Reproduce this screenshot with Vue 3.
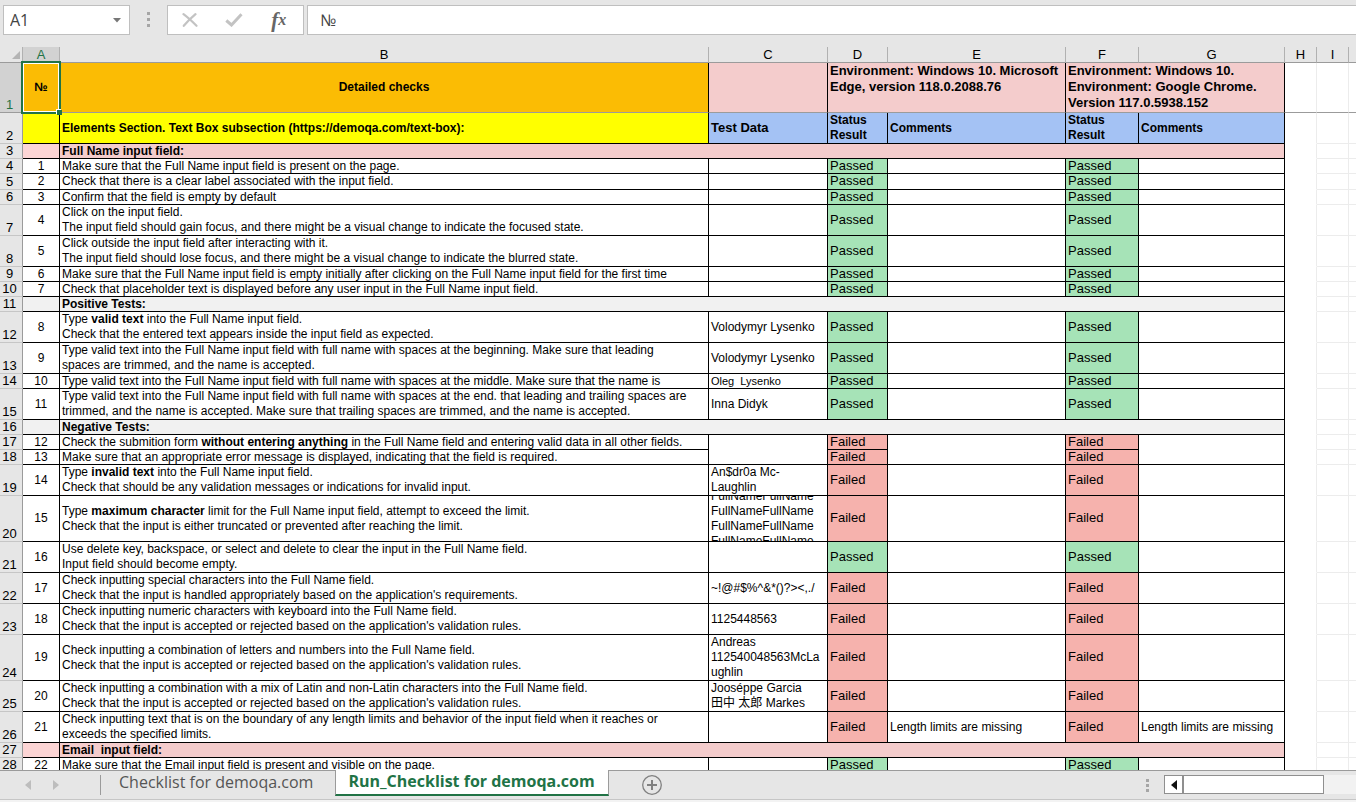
<script setup>
import { ref } from 'vue'

const cellName = ref('A1')
const formula = ref('№')

const columns = [
  { id: 'A', width: 37 },
  { id: 'B', width: 649 },
  { id: 'C', width: 119 },
  { id: 'D', width: 60 },
  { id: 'E', width: 178 },
  { id: 'F', width: 73 },
  { id: 'G', width: 146 },
  { id: 'H', width: 32 },
  { id: 'I', width: 32 },
]

const P = 'Passed'
const F = 'Failed'

// h: row height, n: check number, b: description, c: test data, s: status, note: comment
const rows = [
  { r: 3, h: 15, section: 'Full Name input field:', tone: 'pink' },
  { r: 4, h: 15, n: 1, b: 'Make sure that the Full Name input field is present on the page.', s: P },
  { r: 5, h: 16, n: 2, b: 'Check that there is a clear label associated with the input field.', s: P },
  { r: 6, h: 15, n: 3, b: 'Confirm that the field is empty by default', s: P },
  { r: 7, h: 31, n: 4, b: 'Click on the input field.\nThe input field should gain focus, and there might be a visual change to indicate the focused state.', s: P },
  { r: 8, h: 31, n: 5, b: 'Click outside the input field after interacting with it.\nThe input field should lose focus, and there might be a visual change to indicate the blurred state.', s: P },
  { r: 9, h: 15, n: 6, b: 'Make sure that the Full Name input field is empty initially after clicking on the Full Name input field for the first time', s: P },
  { r: 10, h: 15, n: 7, b: 'Check that placeholder text is displayed before any user input in the Full Name input field.', s: P },
  { r: 11, h: 15, section: 'Positive Tests:', tone: 'grey' },
  { r: 12, h: 31, n: 8, b: 'Type **valid text** into the Full Name input field.\nCheck that the entered text appears inside the input field as expected.', c: 'Volodymyr Lysenko', s: P },
  { r: 13, h: 31, n: 9, b: 'Type valid text into the Full Name input field with full name with spaces at the beginning. Make sure that leading\nspaces are trimmed, and the name is accepted.', c: 'Volodymyr Lysenko', s: P },
  { r: 14, h: 15, n: 10, b: 'Type valid text into the Full Name input field with full name with spaces at the middle. Make sure that the name is', c: 'Oleg  Lysenko', small: true, s: P },
  { r: 15, h: 31, n: 11, b: 'Type valid text into the Full Name input field with full name with spaces at the end. that leading and trailing spaces are\ntrimmed, and the name is accepted. Make sure that trailing spaces are trimmed, and the name is accepted.', c: 'Inna Didyk', s: P },
  { r: 16, h: 15, section: 'Negative Tests:', tone: 'grey' },
  { r: 17, h: 15, n: 12, b: 'Check the submition form **without entering anything** in the Full Name field and entering valid data in all other fields.', s: F, span: 2 },
  { r: 18, h: 15, n: 13, b: 'Make sure that an appropriate error message is displayed, indicating that the field is required.', s: F, merged: true },
  { r: 19, h: 31, n: 14, b: 'Type **invalid text** into the Full Name input field.\nCheck that should be any validation messages or indications for invalid input.', c: 'An$dr0a Mc-\nLaughlin', s: F },
  { r: 20, h: 46, n: 15, b: 'Type **maximum character** limit for the Full Name input field, attempt to exceed the limit.\nCheck that the input is either truncated or prevented after reaching the limit.', c: 'FullNameFullName\nFullNameFullName\nFullNameFullName\nFullNameFullName', s: F },
  { r: 21, h: 31, n: 16, b: 'Use delete key, backspace, or select and delete to clear the input in the Full Name field.\nInput field should become empty.', s: P },
  { r: 22, h: 31, n: 17, b: "Check inputting special characters into the Full Name field.\nCheck that the input is handled appropriately based on the application's requirements.", c: '~!@#$%^&*()?><,./', s: F },
  { r: 23, h: 31, n: 18, b: "Check inputting numeric characters with keyboard into the Full Name field.\nCheck that the input is accepted or rejected based on the application's validation rules.", c: '1125448563', s: F },
  { r: 24, h: 46, n: 19, b: "Check inputting a combination of letters and numbers into the Full Name field.\nCheck that the input is accepted or rejected based on the application's validation rules.", c: 'Andreas\n112540048563McLa\nughlin', s: F },
  { r: 25, h: 31, n: 20, b: "Check inputting a combination with a mix of Latin and non-Latin characters into the Full Name field.\nCheck that the input is accepted or rejected based on the application's validation rules.", c: 'Jooséppe Garcia\n田中 太郎 Markes', s: F },
  { r: 26, h: 31, n: 21, b: 'Check inputting text that is on the boundary of any length limits and behavior of the input field when it reaches or\nexceeds the specified limits.', s: F, note: 'Length limits are missing' },
  { r: 27, h: 15, section: 'Email  input field:', tone: 'pink' },
  { r: 28, h: 15, n: 22, b: 'Make sure that the Email input field is present and visible on the page.', s: P },
]

const parts = (text) => text.split('**')
</script>

<template>
  <div class="app">
    <header class="formula-bar">
      <div class="name-box">
        <input v-model="cellName" aria-label="Name box" />
        <button type="button" aria-label="Open name list">
          <svg width="8" height="5" viewBox="0 0 8 5"><path d="M0 0h8L4 4.5z" fill="#777" /></svg>
        </button>
      </div>
      <svg class="grip" width="4" height="16" viewBox="0 0 4 16" fill="#a6a6a6">
        <rect y="0" width="3" height="3" /><rect y="6" width="3" height="3" /><rect y="12" width="3" height="3" />
      </svg>
      <div class="actions">
        <button type="button" aria-label="Cancel">
          <svg width="16" height="14" viewBox="0 0 16 14" fill="none" stroke="#c3c3c3" stroke-width="2.2" stroke-linecap="round"><path d="M1.5 1.2C6 4.5 10.5 8.8 14.5 12.8M13.5 1.2C9 5 5 9 1.8 12.8" /></svg>
        </button>
        <button type="button" aria-label="Enter">
          <svg width="18" height="14" viewBox="0 0 18 14" fill="none" stroke="#c3c3c3" stroke-width="3"><path d="M1.3 7.5L6.5 12L16.5 1.2" /></svg>
        </button>
        <button type="button" class="fx" aria-label="Insert function">f<span>x</span></button>
      </div>
      <input v-model="formula" class="formula" aria-label="Formula" />
    </header>

    <main class="grid">
      <table>
        <colgroup>
          <col class="col-head" />
          <col v-for="c in columns" :key="c.id" :style="{ width: c.width + 'px' }" />
          <col />
        </colgroup>
        <thead>
          <tr>
            <th class="corner"><svg width="8" height="8" viewBox="0 0 8 8"><path d="M8 0v8H0z" fill="#b4b4b4" /></svg></th>
            <th v-for="c in columns" :key="c.id" scope="col" class="letter" :class="{ selected: c.id === 'A' }">{{ c.id }}</th>
            <th class="letter last"></th>
          </tr>
        </thead>
        <tbody>
          <tr class="frozen" :style="{ '--h': '50px' }">
            <th scope="row" class="num selected"><div>1</div></th>
            <td class="orange center active"><div>№</div><span class="selection"></span><span class="handle"></span></td>
            <td class="orange center"><div>Detailed checks</div></td>
            <td class="pink"></td>
            <td class="pink env" colspan="2"><div>Environment: Windows 10. Microsoft<br />Edge, version 118.0.2088.76</div></td>
            <td class="pink env" colspan="2"><div>Environment: Windows 10.<br />Environment: Google Chrome.<br />Version 117.0.5938.152</div></td>
            <td class="blank"></td>
            <td class="blank"></td>
            <td class="blank last"></td>
          </tr>
          <tr class="titles" :style="{ '--h': '31px' }">
            <th scope="row" class="num"><div>2</div></th>
            <td class="yellow"></td>
            <td class="yellow"><div>Elements Section. Text Box subsection (https://demoqa.com/text-box):</div></td>
            <td class="blue large"><div>Test Data</div></td>
            <td class="blue"><div>Status<br />Result</div></td>
            <td class="blue"><div>Comments</div></td>
            <td class="blue"><div>Status<br />Result</div></td>
            <td class="blue"><div>Comments</div></td>
            <td class="blank bare"></td>
            <td class="blank"></td>
            <td class="blank last"></td>
          </tr>
          <tr v-for="row in rows" :key="row.r" :style="{ '--h': row.h + 'px' }">
            <th scope="row" class="num"><div>{{ row.r }}</div></th>
            <template v-if="row.section">
              <td :class="row.tone + '-light'"></td>
              <td colspan="6" class="section" :class="row.tone"><div>{{ row.section }}</div></td>
            </template>
            <template v-else>
              <td class="center"><div>{{ row.n }}</div></td>
              <td><div><p><template v-for="(t, i) in parts(row.b)" :key="i"><b v-if="i % 2">{{ t }}</b><template v-else>{{ t }}</template></template></p></div></td>
              <td v-if="!row.merged" :rowspan="row.span" :class="{ small: row.small }"><div v-if="row.c"><p>{{ row.c }}</p></div></td>
              <td class="status" :class="row.s.toLowerCase()"><div>{{ row.s }}</div></td>
              <td v-if="!row.merged" :rowspan="row.span"><div v-if="row.note">{{ row.note }}</div></td>
              <td class="status" :class="row.s.toLowerCase()"><div>{{ row.s }}</div></td>
              <td v-if="!row.merged" :rowspan="row.span"><div v-if="row.note">{{ row.note }}</div></td>
            </template>
            <td class="blank bare"></td>
            <td class="blank"></td>
            <td class="blank last"></td>
          </tr>
        </tbody>
      </table>
    </main>

    <footer class="sheet-bar">
      <nav class="tabs" aria-label="Sheets">
        <div class="arrows">
          <button type="button" aria-label="Previous sheet"><svg width="6" height="10" viewBox="0 0 6 10"><path d="M6 0v10L0 5z" fill="#bdbdbd" /></svg></button>
          <button type="button" aria-label="Next sheet"><svg width="6" height="10" viewBox="0 0 6 10"><path d="M0 0v10l6-5z" fill="#bdbdbd" /></svg></button>
        </div>
        <button type="button" class="tab">Checklist for demoqa.com</button>
        <button type="button" class="tab current">Run_Checklist for demoqa.com</button>
        <button type="button" class="add" aria-label="New sheet">
          <svg width="22" height="22" viewBox="0 0 22 22" fill="none" stroke="#808080"><circle cx="11" cy="11" r="9.3" stroke-width="1.3" /><path d="M11 6v10M6 11h10" stroke-width="2" /></svg>
        </button>
      </nav>
      <svg class="grip" width="4" height="14" viewBox="0 0 4 14" fill="#a6a6a6">
        <rect y="0" width="3" height="3" /><rect y="5" width="3" height="3" /><rect y="10" width="3" height="3" />
      </svg>
      <div class="scroll">
        <button type="button" aria-label="Scroll left"><svg width="6" height="10" viewBox="0 0 6 10"><path d="M6 0v10L0 5z" fill="#111" /></svg></button>
        <div class="thumb"></div>
      </div>
    </footer>
  </div>
</template>

<style>
body {
  margin: 0;
  overflow: hidden;
}
</style>

<style scoped>
.app {
  display: flex;
  flex-direction: column;
  height: 100vh;
  overflow: hidden;
  background: #e6e6e6;
  color: #000;
  font-family: "Liberation Sans", "Noto Sans CJK JP", sans-serif;
  font-size: 12px;
}
button,
input {
  margin: 0;
  padding: 0;
  border: 0;
  background: none;
  color: inherit;
  font: inherit;
}
button {
  display: flex;
  align-items: center;
  justify-content: center;
}
svg {
  display: block;
  flex: none;
}

.formula-bar {
  display: flex;
  flex: none;
  height: 30px;
  padding: 5px 0 12px 3px;
  font-family: "Open Sans", "Noto Sans", sans-serif;
  font-size: 16px;
  color: #444;
}
.name-box,
.actions,
.formula {
  box-sizing: border-box;
  border: 1px solid #bfbfbf;
  background: #fff;
}
.name-box {
  display: flex;
  width: 127px;
}
.name-box input {
  flex: 1;
  min-width: 0;
  padding-left: 6px;
}
.name-box button {
  width: 24px;
}
.formula-bar .grip {
  align-self: center;
  margin: 0 16px 0 17px;
}
.actions {
  display: flex;
  width: 137px;
  margin-right: 3px;
  padding-right: 2px;
}
.actions button {
  flex: 1;
}
.fx {
  font-family: "Liberation Serif", serif;
  font-style: italic;
  font-weight: bold;
  font-size: 21px;
  color: #666;
}
.fx span {
  font-size: 16px;
}
.formula {
  flex: 1;
  min-width: 0;
  padding-left: 12px;
  border-right: 0;
}

.grid {
  flex: 1;
  min-height: 0;
  overflow: hidden;
}
table {
  width: 100%;
  table-layout: fixed;
  border-collapse: separate;
  border-spacing: 0;
}
.col-head {
  width: 23px;
}
th,
td {
  box-sizing: border-box;
  height: var(--h);
  padding: 0;
  border: solid #000;
  border-width: 0 1px 1px 0;
  text-align: left;
  vertical-align: middle;
}
td {
  background: #fff;
}
td > div {
  display: flex;
  align-items: center;
  box-sizing: border-box;
  max-height: calc(var(--h) - 1px);
  padding-left: 2px;
  overflow: hidden;
  line-height: 15px;
  white-space: pre;
}
p {
  margin: 0;
}
td.center > div {
  justify-content: center;
  padding: 0;
}
.corner,
.letter {
  height: 16px;
  border-color: #b1b1b1;
  border-bottom-color: #9b9b9b;
  font-size: 13px;
  font-weight: normal;
  line-height: 15px;
  text-align: center;
}
.corner svg {
  margin-left: 12px;
}
.num {
  border-color: #c6c6c6;
  border-right-color: #9b9b9b;
  font-weight: normal;
  font-size: 13px;
  vertical-align: bottom;
}
.num div {
  max-height: calc(var(--h) - 1px);
  padding-right: 3px;
  line-height: 14px;
  text-align: center;
}
th.selected {
  background: #d2d2d2;
  color: #217346;
}
.frozen th,
.frozen td {
  border-bottom-color: #9b9b9b;
}
.frozen,
.titles,
.section {
  font-weight: bold;
}
.active {
  position: relative;
}
.selection {
  position: absolute;
  inset: -2px;
  z-index: 1;
  border: 2px solid #217346;
  box-shadow: inset 0 0 0 1px #fff;
}
.handle {
  position: absolute;
  right: -3px;
  bottom: -3px;
  z-index: 2;
  width: 5px;
  height: 5px;
  background: #217346;
  box-shadow: -1px -1px 0 #fff;
}
td.env {
  vertical-align: top;
}
td.env > div {
  font-size: 13px;
  line-height: 16px;
}
.large,
.status {
  font-size: 13px;
}
.large > div,
.status > div {
  padding-bottom: 2px;
}
.small {
  font-size: 11px;
}
.orange {
  background: #fbbc04;
}
.yellow {
  background: #ff0;
}
.blue {
  background: #a4c2f4;
}
.pink {
  background: #f4cccc;
}
.pink-light {
  background: #fcd5d5;
}
.grey,
.grey-light {
  background: #f1f1f1;
}
.passed {
  background: #a6e3b7;
}
.failed {
  background: #f6b2ad;
}
.blank {
  border-color: #ececec;
}
.bare {
  border-bottom-color: #fff;
}
th.last,
td.last {
  border-right: 0;
}

.sheet-bar {
  display: flex;
  flex: none;
  height: 28px;
  border-top: 1px solid #9b9b9b;
  border-bottom: 1px solid #c6c6c6;
  margin-bottom: 2px;
  box-shadow: 0 2px 0 #f3f3f3;
}
.tabs {
  display: flex;
  flex: 1;
  align-items: flex-start;
  font-family: "Open Sans", "Noto Sans", sans-serif;
  font-size: 16px;
}
.arrows {
  display: flex;
  gap: 22px;
  box-sizing: border-box;
  width: 101px;
  height: 20px;
  margin-top: 4px;
  padding-left: 25px;
  border-right: 1px solid #9b9b9b;
}
.tab {
  height: 25px;
  padding: 0 22px 4px 18px;
  color: #555;
  line-height: 20px;
  white-space: nowrap;
}
.tab.current {
  margin-top: -1px;
  height: 26px;
  padding: 0 13px 2px 12px;
  border: solid #9b9b9b;
  border-width: 0 1px;
  border-bottom: 2px solid #217346;
  background: #fff;
  color: #217346;
  font-weight: bold;
}
.add {
  margin: 3px 0 0 32px;
}
.sheet-bar .grip {
  margin: 8px 14px 0 0;
}
.scroll {
  display: flex;
  width: 192px;
  height: 19px;
  margin-top: 4px;
  background: #f2f2f2;
}
.scroll button,
.thumb {
  box-sizing: border-box;
  border: 1px solid #8f8f8f;
  background: #fff;
}
.scroll button {
  width: 19px;
}
.thumb {
  width: 141px;
}
</style>
